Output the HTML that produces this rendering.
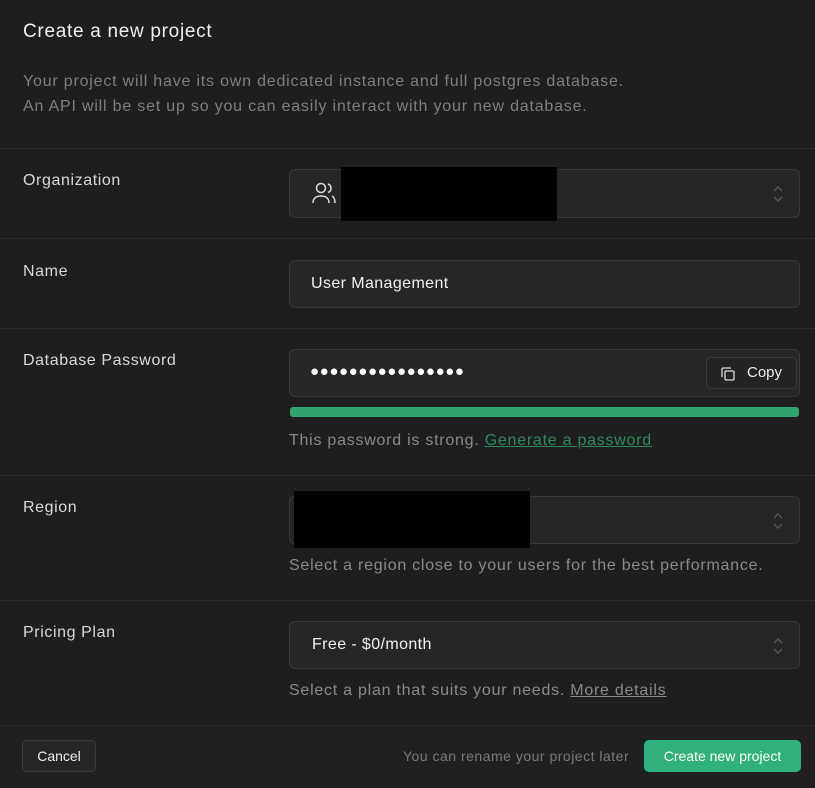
<!DOCTYPE html><html><head><style>
body{margin:0;width:815px;height:788px;background:#1e1e1e;font-family:"Liberation Sans",sans-serif;position:relative;overflow:hidden;color:#ededed}
.a{position:absolute;white-space:nowrap}
.hr{position:absolute;left:0;width:815px;height:1px;background:#2c2c2c}
.lbl{position:absolute;left:23px;font-size:16px;color:#d8d8d8;letter-spacing:0.6px}
.inp{position:absolute;left:289px;width:511px;background:#262626;border:1px solid #383838;border-radius:6px;box-sizing:border-box}
.help{position:absolute;left:289px;font-size:16px;color:#8a8a8a;letter-spacing:0.75px;white-space:nowrap}
.chev{position:absolute;right:14px;top:13px;width:14px;height:22px}
</style></head><body>
<div class="a" style="left:23px;top:21px;font-size:19px;color:#f0f0f0;letter-spacing:0.7px">Create a new project</div>
<div class="a" style="left:23px;top:69px;font-size:16px;color:#7f7f7f;line-height:25px;letter-spacing:0.8px">Your project will have its own dedicated instance and full postgres database.<br>An API will be set up so you can easily interact with your new database.</div>
<div class="hr" style="top:148px"></div>
<div class="lbl" style="top:172px">Organization</div>
<div class="inp" style="top:169px;height:49px">
<svg class="a" style="left:21px;top:12px" width="26" height="22" viewBox="0 0 26 22" fill="none" stroke="#ddd" stroke-width="1.5"><circle cx="10" cy="6" r="4.5"/><path d="M2 21c0-5 3.5-7 8-7s8 2 8 7"/><path d="M17 2a4.5 4.5 0 0 1 0 8.5M21 14c2 1 3 3 3 7"/></svg>
<svg class="chev" viewBox="0 0 14 22" fill="none" stroke="#555" stroke-width="1.5"><path d="M3 8l4-4 4 4M3 14l4 4 4-4"/></svg></div>
<div class="a" style="left:341px;top:167px;width:216px;height:54px;background:#000"></div>
<div class="hr" style="top:238px"></div>
<div class="lbl" style="top:263px">Name</div>
<div class="inp" style="top:260px;height:48px"><div class="a" style="left:21px;top:14px;font-size:16px;color:#f2f2f2;letter-spacing:0.4px">User Management</div></div>
<div class="hr" style="top:328px"></div>
<div class="lbl" style="top:352px">Database Password</div>
<div class="inp" style="top:349px;height:48px"><div class="a" style="left:20px;top:13px;font-size:15px;color:#fff;letter-spacing:0.6px">●●●●●●●●●●●●●●●●</div>
<div class="a" style="left:416px;top:7px;width:91px;height:32px;border:1px solid #3a3a3a;border-radius:5px;background:#232323;box-sizing:border-box">
<svg class="a" style="left:13px;top:8px" width="16" height="16" viewBox="0 0 16 16" fill="none" stroke="#ddd" stroke-width="1.3"><rect x="5" y="5" width="9" height="9" rx="1"/><path d="M2 11V3a1 1 0 0 1 1-1h8"/></svg>
<div class="a" style="left:40px;top:6px;font-size:15px;color:#eee">Copy</div></div></div>
<div class="a" style="left:290px;top:407px;width:509px;height:10px;border-radius:3px;background:#30a46c"></div>
<div class="help" style="top:432px">This password is strong. <span style="color:#2e8a5c;text-decoration:underline">Generate a password</span></div>
<div class="hr" style="top:475px"></div>
<div class="lbl" style="top:499px">Region</div>
<div class="inp" style="top:496px;height:48px"><svg class="chev" viewBox="0 0 14 22" fill="none" stroke="#555" stroke-width="1.5"><path d="M3 8l4-4 4 4M3 14l4 4 4-4"/></svg></div>
<div class="a" style="left:294px;top:491px;width:236px;height:57px;background:#000"></div>
<div class="help" style="top:557px">Select a region close to your users for the best performance.</div>
<div class="hr" style="top:600px"></div>
<div class="lbl" style="top:624px">Pricing Plan</div>
<div class="inp" style="top:621px;height:48px"><div class="a" style="left:22px;top:14px;font-size:16px;color:#f2f2f2;letter-spacing:0.4px">Free - $0/month</div><svg class="chev" viewBox="0 0 14 22" fill="none" stroke="#555" stroke-width="1.5"><path d="M3 8l4-4 4 4M3 14l4 4 4-4"/></svg></div>
<div class="help" style="top:682px">Select a plan that suits your needs. <span style="text-decoration:underline">More details</span></div>
<div class="hr" style="top:725px;background:#2a2a2a"></div>
<div class="a" style="left:0;top:726px;width:815px;height:62px;background:#202020"></div>
<div class="a" style="left:22px;top:740px;width:74px;height:32px;border:1px solid #3a3a3a;border-radius:5px;background:#262626;box-sizing:border-box;font-size:14px;color:#f0f0f0;text-align:center;line-height:30px">Cancel</div>
<div class="a" style="left:403px;top:748px;font-size:14px;color:#7a7a7a;letter-spacing:0.5px">You can rename your project later</div>
<div class="a" style="left:644px;top:740px;width:157px;height:32px;border-radius:5px;background:#30b07a;font-size:14px;color:#fff;text-align:center;line-height:32px">Create new project</div>
</body></html>
